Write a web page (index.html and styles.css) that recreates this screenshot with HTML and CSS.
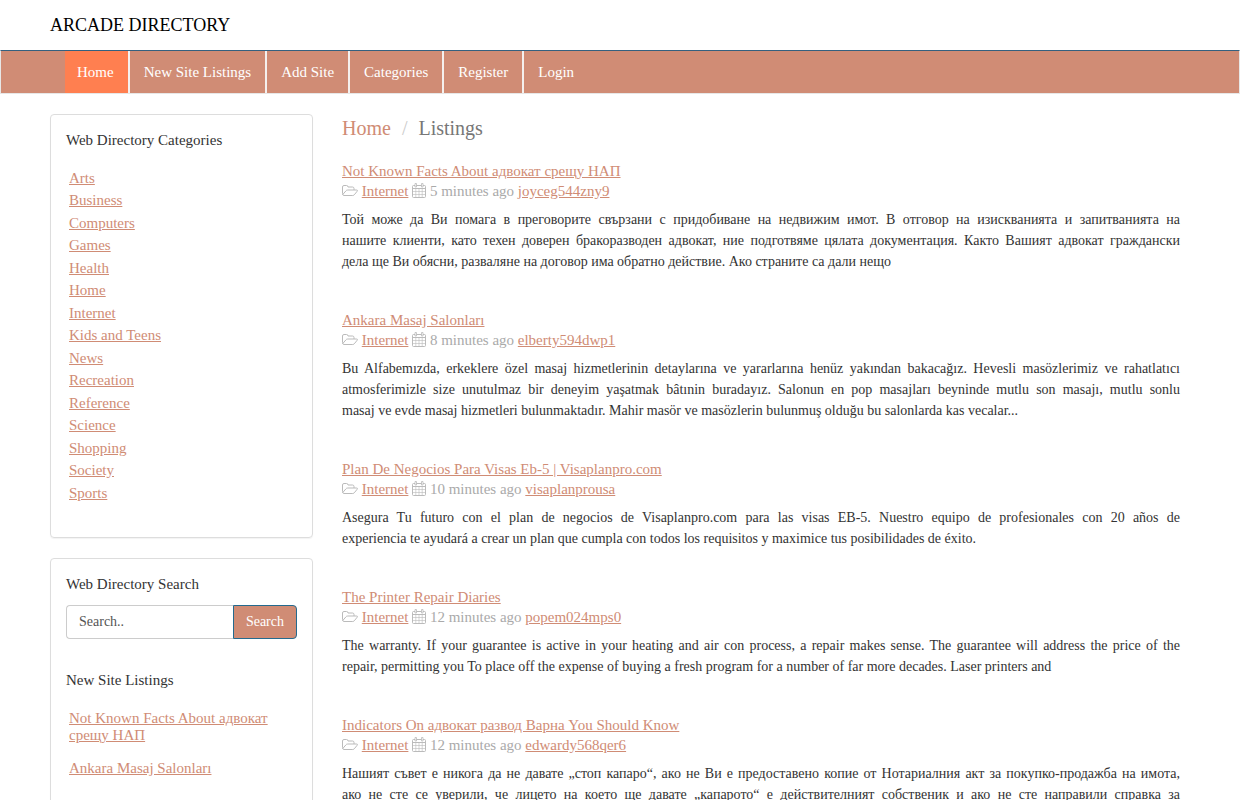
FILE: index.html
```html
<!DOCTYPE html>
<html lang="en">
<head>
<meta charset="utf-8">
<meta name="viewport" content="width=device-width, initial-scale=1">
<title>Arcade Directory</title>
<link rel="stylesheet" href="styles.css">
</head>
<body>
<svg class="sprite" aria-hidden="true">
  <symbol id="folder" viewBox="0 0 16 15">
    <path d="M.5 10.500V4Q.5 2.500 2 2.500H4.500Q6 2.500 6 4H10.500Q12 4 12 5.500V7M.8 11.500L3.800 8Q4.500 7 5.700 7H14.500Q16 7 15.200 8.200L12.800 11.200Q12 12.500 10.700 12.500H2Q.5 12.500 .5 10.500" fill="none" stroke="currentColor"/>
  </symbol>
  <symbol id="calendar" viewBox="0 0 14 15">
    <path d="M1.500 2.500H12.500Q13.500 2.500 13.500 3.500V13.500Q13.500 14.500 12.500 14.500H1.500Q.5 14.500 .5 13.500V3.500Q.5 2.500 1.500 2.500ZM.5 5.500H13.500" fill="none" stroke="currentColor"/>
    <path d="M.5 8.500H13.500M.5 11.500H13.500M3.800 5.500V14.500M7 5.500V14.500M10.200 5.500V14.500" fill="none" stroke="currentColor" stroke-width=".6"/>
    <path d="M3 .5H4.500V4H3ZM9.500 .5H11V4H9.500Z" fill="#fff" stroke="currentColor" stroke-width=".8"/>
  </symbol>
</svg>
<header class="header"><div class="container"><a class="brand" href="#">ARCADE DIRECTORY</a></div></header>
<nav class="navbar">
  <ul class="container nav-list">
    <li><a class="active" href="#">Home</a></li>
    <li><a href="#">New Site Listings</a></li>
    <li><a href="#">Add Site</a></li>
    <li><a href="#">Categories</a></li>
    <li><a href="#">Register</a></li>
    <li><a href="#">Login</a></li>
  </ul>
</nav>
<div class="container columns">
  <aside class="sidebar">
    <section class="panel">
      <h2 class="panel-title">Web Directory Categories</h2>
      <ul class="categories">
        <li><a href="#">Arts</a></li>
        <li><a href="#">Business</a></li>
        <li><a href="#">Computers</a></li>
        <li><a href="#">Games</a></li>
        <li><a href="#">Health</a></li>
        <li><a href="#">Home</a></li>
        <li><a href="#">Internet</a></li>
        <li><a href="#">Kids and Teens</a></li>
        <li><a href="#">News</a></li>
        <li><a href="#">Recreation</a></li>
        <li><a href="#">Reference</a></li>
        <li><a href="#">Science</a></li>
        <li><a href="#">Shopping</a></li>
        <li><a href="#">Society</a></li>
        <li><a href="#">Sports</a></li>
      </ul>
    </section>
    <section class="panel">
      <h2 class="panel-title"><label for="search">Web Directory Search</label></h2>
      <form class="search">
        <input id="search" class="search-input" type="text" placeholder="Search..">
        <button class="search-button" type="button">Search</button>
      </form>
      <h2 class="panel-title">New Site Listings</h2>
      <ul class="recent">
        <li><a href="#">Not Known Facts About адвокат срещу НАП</a></li>
        <li><a href="#">Ankara Masaj Salonları</a></li>
      </ul>
    </section>
  </aside>
  <main class="main">
    <ol class="breadcrumb"><li><a href="#">Home</a></li><li>Listings</li></ol>
    <article class="listing">
      <h3 class="listing-title"><a href="#">Not Known Facts About адвокат срещу НАП</a></h3>
      <div class="meta"><svg class="folder"><use href="#folder"/></svg> <a href="#">Internet</a> <svg class="calendar"><use href="#calendar"/></svg> 5 minutes ago <a href="#">joyceg544zny9</a></div>
      <p class="summary">Той може да Ви помага в преговорите свързани с придобиване на недвижим имот. В отговор на изискванията и запитванията на нашите&nbsp;клиенти, като техен доверен бракоразводен адвокат, ние подготвяме цялата документация. Както Вашият адвокат граждански дела&nbsp;ще&nbsp;Ви&nbsp;обясни, разваляне на договор има обратно действие. Ако страните са дали нещо</p>
    </article>
    <article class="listing">
      <h3 class="listing-title"><a href="#">Ankara Masaj Salonları</a></h3>
      <div class="meta"><svg class="folder"><use href="#folder"/></svg> <a href="#">Internet</a> <svg class="calendar"><use href="#calendar"/></svg> 8 minutes ago <a href="#">elberty594dwp1</a></div>
      <p class="summary">Bu Alfabemızda, erkeklere özel masaj hizmetlerinin detaylarına ve yararlarına henüz yakından bakacağız. Hevesli masözlerimiz ve rahatlatıcı atmosferimizle size unutulmaz bir deneyim yaşatmak bâtınin buradayız. Salonun en pop masajları beyninde mutlu son masajı, mutlu sonlu masaj&nbsp;ve&nbsp;evde masaj hizmetleri bulunmaktadır. Mahir masör ve masözlerin bulunmuş olduğu bu salonlarda kas vecalar...</p>
    </article>
    <article class="listing">
      <h3 class="listing-title"><a href="#">Plan De Negocios Para Visas Eb-5 | Visaplanpro.com</a></h3>
      <div class="meta"><svg class="folder"><use href="#folder"/></svg> <a href="#">Internet</a> <svg class="calendar"><use href="#calendar"/></svg> 10 minutes ago <a href="#">visaplanprousa</a></div>
      <p class="summary">Asegura Tu futuro con el plan de negocios de Visaplanpro.com para las visas EB-5. Nuestro equipo de profesionales con 20 años de experiencia&nbsp;te&nbsp;ayudará a crear un plan que cumpla con todos los requisitos y maximice tus posibilidades de éxito.</p>
    </article>
    <article class="listing">
      <h3 class="listing-title"><a href="#">The Printer Repair Diaries</a></h3>
      <div class="meta"><svg class="folder"><use href="#folder"/></svg> <a href="#">Internet</a> <svg class="calendar"><use href="#calendar"/></svg> 12 minutes ago <a href="#">popem024mps0</a></div>
      <p class="summary">The warranty. If your guarantee is active in your heating and air con process, a repair makes sense. The guarantee will address the price of the repair,&nbsp;permitting you To place off the expense of buying a fresh program for a number of far more decades. Laser printers and</p>
    </article>
    <article class="listing">
      <h3 class="listing-title"><a href="#">Indicators On адвокат развод Варна You Should Know</a></h3>
      <div class="meta"><svg class="folder"><use href="#folder"/></svg> <a href="#">Internet</a> <svg class="calendar"><use href="#calendar"/></svg> 12 minutes ago <a href="#">edwardy568qer6</a></div>
      <p class="summary">Нашият съвет е никога да не давате „стоп капаро“, ако не Ви е предоставено копие от Нотариалния акт за покупко-продажба на имота, ако&nbsp;не&nbsp;сте&nbsp;се уверили, че лицето на което ще давате „капарото“ е действителният собственик и ако не сте направили справка за вещни&nbsp;тежести&nbsp;върху&nbsp;имота.</p>
    </article>
  </main>
</div>
</body>
</html>
```
FILE: styles.css
```css
* { box-sizing: border-box; }
body {
  margin: 0;
  background: #fff;
  color: #333;
  font: 15px/21px "Liberation Serif", "Times New Roman", serif;
  overflow-x: hidden;
}
ul, ol { margin: 0; padding: 0; list-style: none; }
a { color: #d08c75; text-decoration: underline; }
.sprite { display: none; }
.container { max-width: 1170px; margin: 0 auto; padding: 0 15px; }
.header { padding: 13px 0 12px; font-size: 18px; line-height: 25px; }
.brand { color: #000; text-decoration: none; }
.navbar {
  background: #d08c75;
  border: 1px solid #e7e7e7;
  border-top-color: #34607f;
}
.nav-list { display: flex; padding-left: 30px; }
.nav-list li + li { border-left: 2px solid #f5f0ee; }
.nav-list a { display: block; padding: 11px 14px 10px; color: #fff; text-decoration: none; }
.nav-list .active { padding-left: 12px; background: #ff7f50; }
.columns { display: grid; grid-template-columns: minmax(0, 263fr) minmax(0, 848fr); gap: 29px; padding-top: 20px; }
.panel {
  margin-bottom: 20px;
  padding: 15px;
  border: 1px solid #ddd;
  border-radius: 4px;
  box-shadow: 0 1px 1px rgba(0, 0, 0, .05);
}
.panel-title { margin: 0; font-size: 15px; font-weight: 400; line-height: 21px; }
.categories { display: grid; grid-auto-rows: 1fr; height: 337px; margin: 16px 3px 18px; line-height: 22px; }
.search { display: flex; margin: 10px 0 31px; }
.search-input, .search-button {
  height: 34px;
  padding: 6px 12px;
  font: 14px/20px "Liberation Serif", "Times New Roman", serif;
}
.search-input {
  flex: 1;
  min-width: 0;
  border: 1px solid #ccc;
  border-right: 0;
  border-radius: 4px 0 0 4px;
  background: #fff;
  color: #555;
}
.search-input::placeholder { color: #555; opacity: 1; }
.search-button {
  border: 1px solid #246a8e;
  border-radius: 0 4px 4px 0;
  background: #d08c75;
  color: #fff;
}
.recent { display: grid; gap: 16px; margin: 19px 3px; line-height: 17px; }
.main { padding-right: 10px; }
.breadcrumb { display: flex; margin-bottom: 19px; color: #777; font-size: 20px; line-height: 28px; }
.breadcrumb a { text-decoration: none; }
.breadcrumb li + li::before { content: "/"; padding: 0 11px; color: #ccc; }
.listing { margin-bottom: 38px; }
.listing-title { margin: 0; font-size: 15px; font-weight: 400; line-height: 20px; }
.meta { color: #aaa; line-height: 20px; }
.meta svg { height: 15px; vertical-align: -2px; color: #bbb; }
.meta .folder { width: 16px; }
.meta .calendar { width: 14px; }
.summary { margin: 8px 0 0; font-size: 14px; line-height: 21px; text-align: justify; }
```
